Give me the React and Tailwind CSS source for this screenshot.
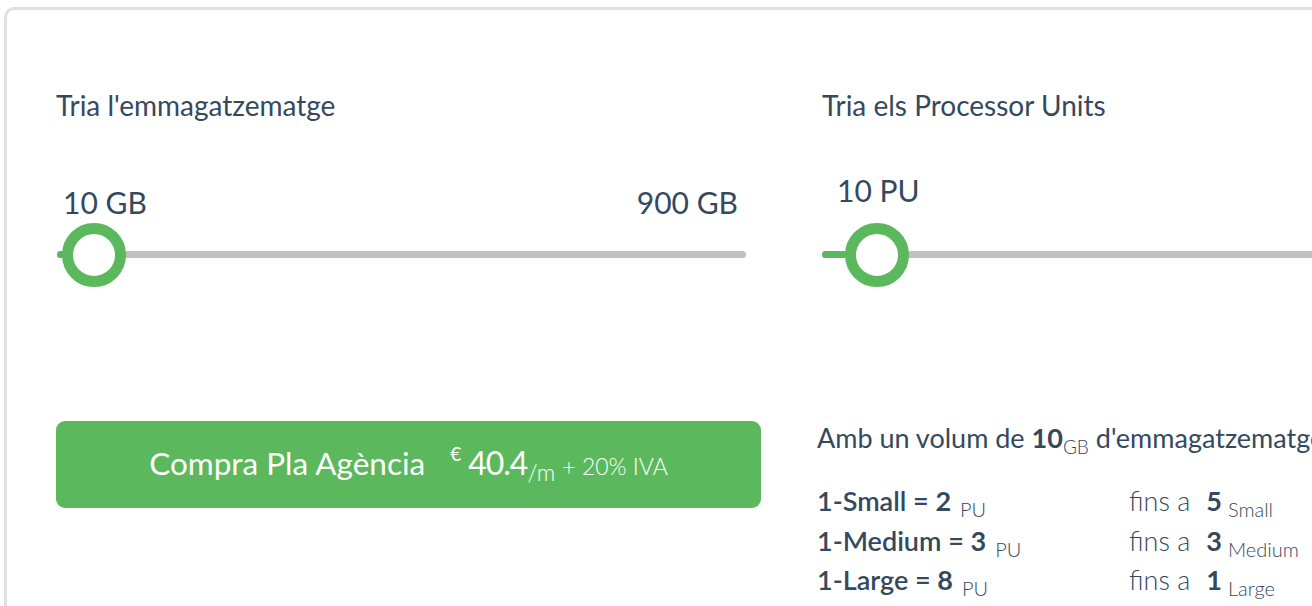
import React from "react";

function Slider({ handleLeft, fillWidth, trackClass }) {
  return (
    <div className={"relative h-16 " + trackClass}>
      <div className="absolute left-0 right-0 top-[28px] h-[7px] rounded-full bg-[#c0c0c0]" />
      <div
        className="absolute left-0 top-[28px] h-[7px] rounded-full bg-[#5cb85c]"
        style={{ width: fillWidth }}
      />
      <div
        className="absolute top-0 h-16 w-16 rounded-full border-[11px] border-[#5cb85c] bg-white"
        style={{ left: handleLeft }}
      />
    </div>
  );
}

function Row({ name, pu, count, size }) {
  return (
    <div className="grid h-[39.5px] grid-cols-[312px_1fr] items-center">
      <div className="whitespace-nowrap">
        <span className="font-semibold">1-{name} = </span>
        <span className="font-bold">{pu}</span>
        <span className="relative top-[6px] ml-[9px] text-[20px] font-light">PU</span>
      </div>
      <div className="whitespace-nowrap">
        <span className="font-light">fins a</span>
        <span className="ml-[16px] font-bold">{count}</span>
        <span className="relative top-[6px] ml-[6px] text-[20px] font-light">{size}</span>
      </div>
    </div>
  );
}

export default function App() {
  return (
    <div
      className="h-[606px] w-[1312px] overflow-hidden bg-white pl-[4px] pt-[7px] text-[#34495e]"
      style={{ fontFamily: "Lato, 'Open Sans', sans-serif" }}
    >
      <div className="h-[800px] w-[1600px] rounded-[10px] border-[3px] border-[#e0e0e0] pl-[49px] pt-[78px]">
        <div className="grid grid-cols-[705px_1fr] gap-x-[56px]">
          {/* Left column */}
          <div className="flex flex-col">
            <div className="h-[34px] text-[28px] leading-[34px]">Tria l'emmagatzematge</div>
            <div className="mt-[62px] flex h-[36px] items-center justify-between pl-[7px] pr-[23px] text-[30px] leading-[36px]">
              <span>10 GB</span>
              <span>900 GB</span>
            </div>
            <div className="mt-[3px]">
              <Slider trackClass="ml-[1px] mr-[15px]" handleLeft={5} fillWidth={36} />
            </div>
            <button className="mt-[134px] flex h-[87px] w-[705px] items-baseline justify-center rounded-[9px] bg-[#5cb85c] pt-[24px] text-white">
              <span className="text-[31.5px] leading-[36px]">Compra Pla Agència</span>
              <span className="relative top-[-14px] ml-[25px] text-[19px]">€</span>
              <span className="ml-[7px] text-[32px] leading-[36px] tracking-[-1px]">40.4</span>
              <span className="relative top-[6px] text-[23px] font-light">/m</span>
              <span className="ml-[7px] text-[23px] font-light">+ 20% IVA</span>
            </button>
          </div>

          {/* Right column */}
          <div className="flex flex-col">
            <div className="ml-[5px] h-[34px] whitespace-nowrap text-[28px] leading-[34px]">Tria els Processor Units</div>
            <div className="ml-[20px] mt-[50px] h-[36px] text-[30px] leading-[36px]">10 PU</div>
            <div className="mt-[15px]">
              <Slider trackClass="ml-[5px]" handleLeft={23} fillWidth={50} />
            </div>
            <div className="mt-[134px] h-[34px] whitespace-nowrap text-[27px] leading-[34px]">
              Amb un volum de <span className="font-bold">10</span>
              <span className="relative top-[6px] text-[19px] font-light">GB</span> d'emmagatzematge
            </div>
            <div className="mt-[26px] text-[27px]">
              <Row name="Small" pu="2" count="5" size="Small" />
              <Row name="Medium" pu="3" count="3" size="Medium" />
              <Row name="Large" pu="8" count="1" size="Large" />
            </div>
          </div>
        </div>
      </div>
    </div>
  );
}
